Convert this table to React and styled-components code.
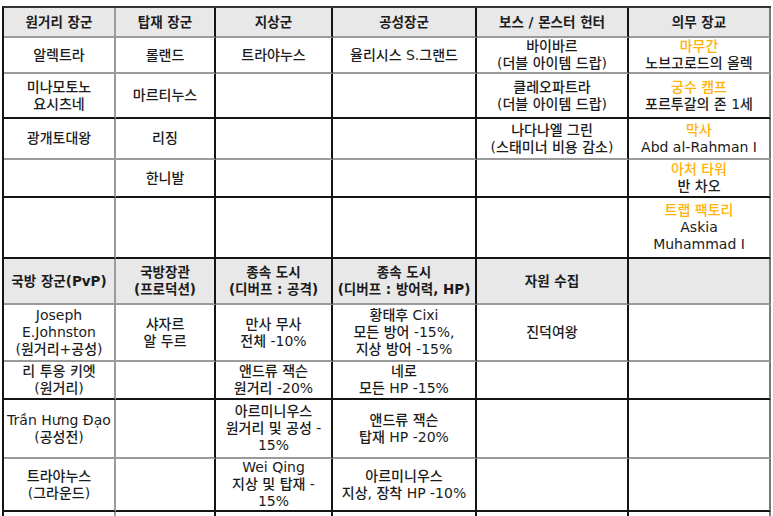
import React from 'react'
import styled, { createGlobalStyle } from 'styled-components'

const GlobalStyle = createGlobalStyle`
  html, body {
    margin: 0;
    padding: 0;
    background: #fff;
    overflow: hidden;
  }
  body {
    font-family: 'DejaVu Sans', 'Noto Sans CJK KR', sans-serif;
    color: #1c1c1c;
  }
`

const BLACK = '#141414'
const GREY = '#9b9b9b'
const EDGE = '#7a7a7a'
const ORANGE = '#ffb20a'

const widths = [112, 100, 117, 144, 152, 142]
const vlines = [GREY, BLACK, BLACK, BLACK, BLACK, EDGE]

const Sheet = styled.div`
  margin: 6px 0 0 2px;
  width: fit-content;
  border-left: 2px solid ${BLACK};
  border-top: 2px solid #333;
`

const Row = styled.div`
  display: grid;
  grid-template-columns: ${widths.map((w) => `${w}px`).join(' ')};
  height: ${(p) => p.$h}px;
`

const Cell = styled.div`
  box-sizing: border-box;
  display: flex;
  flex-direction: column;
  align-items: center;
  justify-content: center;
  text-align: center;
  border-right: 2px solid ${(p) => p.$v};
  border-bottom: ${(p) => (p.$h ? `2px solid ${p.$h}` : 'none')};
  background: ${(p) => (p.$head ? '#e8e8e8' : '#fff')};
  font-size: ${(p) => (p.$head ? '13.5px' : '14px')};
  font-weight: ${(p) => (p.$head ? 700 : 500)};
  line-height: 17px;
  white-space: nowrap;
`

const Line = styled.span`
  display: block;
  color: ${(p) => (p.$accent ? ORANGE : 'inherit')};
`

// a cell is a string with \n for line breaks; "*" prefix marks an orange line
const renderLines = (text) =>
  text
    .split('\n')
    .filter((t) => t.length)
    .map((t, i) =>
      t.startsWith('*') ? (
        <Line key={i} $accent>{t.slice(1)}</Line>
      ) : (
        <Line key={i}>{t}</Line>
      )
    )

const rows = [
  {
    h: 30, line: GREY, head: true,
    cells: ['원거리 장군', '탑재 장군', '지상군', '공성장군', '보스 / 몬스터 헌터', '의무 장교'],
  },
  {
    h: 36, line: GREY,
    cells: ['알렉트라', '롤랜드', '트라야누스', '율리시스 S.그랜드', '바이바르\n(더블 아이템 드랍)', '*마무간\n노브고로드의 올렉'],
  },
  {
    h: 45, line: BLACK,
    cells: ['미나모토노\n요시츠네', '마르티누스', '', '', '클레오파트라\n(더블 아이템 드랍)', '*궁수 캠프\n포르투갈의 존 1세'],
  },
  {
    h: 41, line: GREY,
    cells: ['광개토대왕', '리징', '', '', '나다나엘 그린\n(스태미너 비용 감소)', '*막사\nAbd al-Rahman I'],
  },
  {
    h: 38, line: BLACK,
    cells: ['', '한니발', '', '', '', '*아처 타워\n반 차오'],
  },
  {
    h: 61, line: BLACK,
    cells: ['', '', '', '', '', '*트랩 팩토리\nAskia\nMuhammad I'],
  },
  {
    h: 46, line: GREY, head: true,
    cells: ['국방 장군(PvP)', '국방장관\n(프로덕션)', '종속 도시\n(디버프 : 공격)', '종속 도시\n(디버프 : 방어력, HP)', '자원 수집', ''],
  },
  {
    h: 57, line: GREY,
    cells: ['Joseph\nE.Johnston\n(원거리+공성)', '샤자르\n알 두르', '만사 무사\n전체 -10%', '황태후 Cixi\n모든 방어 -15%,\n지상 방어 -15%', '진덕여왕', ''],
  },
  {
    h: 38, line: BLACK,
    cells: ['리 투옹 키엣\n(원거리)', '', '앤드류 잭슨\n원거리 -20%', '네로\n모든 HP -15%', '', ''],
  },
  {
    h: 59, line: GREY,
    cells: ['Trần Hưng Đạo\n(공성전)', '', '아르미니우스\n원거리 및 공성 -\n15%', '앤드류 잭슨\n탑재 HP -20%', '', ''],
  },
  {
    h: 53, line: BLACK,
    cells: ['트라야누스\n(그라운드)', '', 'Wei Qing\n지상 및 탑재 -\n15%', '아르미니우스\n지상, 장착 HP -10%', '', ''],
  },
  {
    h: 20, line: null,
    cells: ['', '', '', '', '', ''],
  },
]

export default function App() {
  return (
    <>
      <GlobalStyle />
      <Sheet>
        {rows.map((row, r) => (
          <Row key={r} $h={row.h}>
            {row.cells.map((text, c) => (
              <Cell key={c} $v={vlines[c]} $h={row.line} $head={row.head}>
                {renderLines(text)}
              </Cell>
            ))}
          </Row>
        ))}
      </Sheet>
    </>
  )
}
